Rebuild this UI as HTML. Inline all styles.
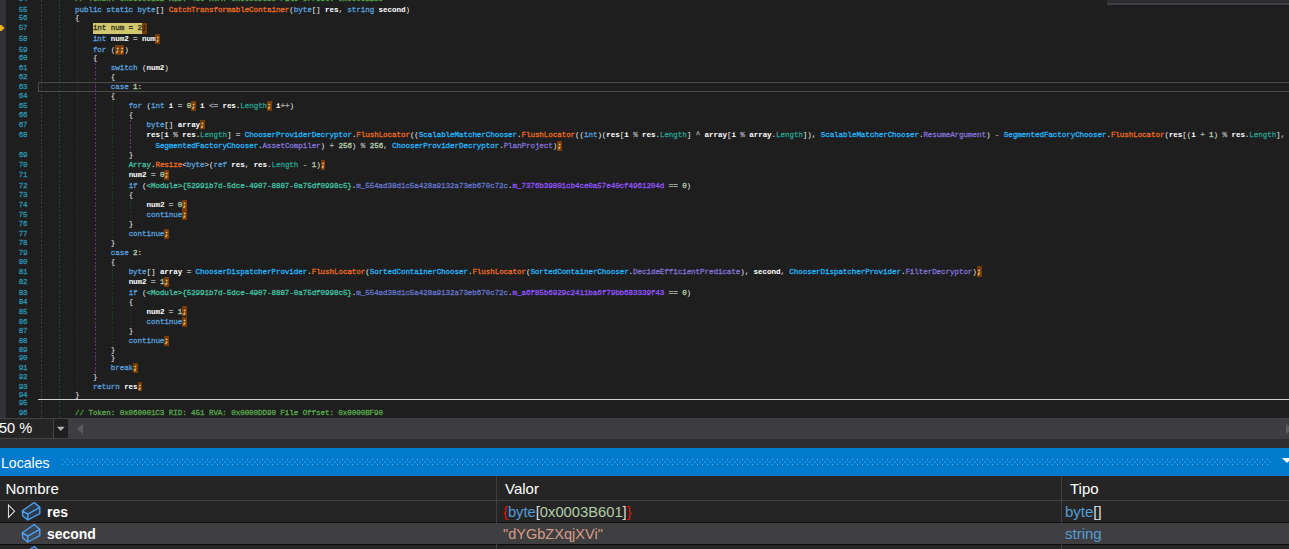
<!DOCTYPE html>
<html><head><meta charset="utf-8"><title>dnSpy</title>
<style>
html,body{margin:0;padding:0;background:#1e1e1e;}
body{width:1289px;height:549px;overflow:hidden;position:relative;font-family:"Liberation Sans",sans-serif;}
#code{position:absolute;left:0;top:0;width:1289px;height:418px;background:#1e1e1e;overflow:hidden;}
#margin{position:absolute;left:0;top:0;width:6px;height:418px;background:#333337;}
.ln,.no{position:absolute;white-space:pre;font-family:"Liberation Mono",monospace;font-size:7.6px;letter-spacing:-0.0938px;line-height:10.0px;height:10.0px;color:#dcdcdc;-webkit-text-stroke:0.3px;}
.no{left:0;width:27.6px;text-align:right;color:#2b91af;}
.k{color:#569cd6} .t{color:#3fbf9f} .st{color:#24b0f3} .sm{color:#e8691e}
.l{color:#fff;font-weight:bold;-webkit-text-stroke:0} .n{color:#b5cea8} .p{color:#dcdcdc;-webkit-text-stroke:0.12px} .o{color:#a0a0a0}
.ip{color:#259c88} .sf{color:#7e70d0} .sf2{color:#9052f5} .vt{color:#6373c6} .c{color:#57a64a}
.h{color:#ffcf8a;font-weight:bold} .hd{color:#2a1800;font-weight:bold}
.yl{color:#34321a}
.bh,.by{position:absolute}
.bh{background:#753c04} .by{background:#d0c86e}
.g{position:absolute;width:1px;}
.g0{background:repeating-linear-gradient(to bottom,#3b3b3b 0 2px,transparent 2px 3.75px);}
.g1{background:repeating-linear-gradient(to bottom,#1c463d 0 2px,transparent 2px 3.75px);}
.g2{background:repeating-linear-gradient(to bottom,#1c2f3e 0 2px,transparent 2px 3.75px);}
.g3{background:repeating-linear-gradient(to bottom,#6c2e80 0 2px,transparent 2px 3.75px);}
.g4{background:repeating-linear-gradient(to bottom,#1c3c1c 0 2px,transparent 2px 3.75px);}
.g5{background:repeating-linear-gradient(to bottom,#6c3488 0 2px,transparent 2px 3.75px);}
#curline{position:absolute;left:38px;top:82px;width:1260px;height:8px;border:1px solid #4a4a4a;box-sizing:content-box;}
#sep{position:absolute;left:38px;top:399px;width:1251px;height:1px;background:#d2d2d2;}
#topbox{position:absolute;left:1107px;top:0;width:182px;height:3px;background:#2d2d30;border-bottom:2px solid #3f3f46;}
#arrow{position:absolute;left:0;top:24px;}
#hbar{position:absolute;left:0;top:418px;width:1289px;height:21px;background:#3e3e42;}
#zoom{position:absolute;left:0;top:0;width:54px;height:21px;background:#252526;color:#fff;font-size:15px;line-height:19px;border:1px solid #434346;border-left:0;box-sizing:border-box;overflow:hidden;}
#zoom span{position:absolute;left:-1px;top:-0.7px;display:inline-block;transform:scaleX(0.97);transform-origin:0 0;}
#zbtn{position:absolute;left:54px;top:0;width:14px;height:21px;background:#1f1f20;border-top:1px solid #434346;border-bottom:1px solid #434346;box-sizing:border-box;}
#zbtn svg{position:absolute;left:0;top:-1px}
#gap{position:absolute;left:0;top:439px;width:1289px;height:9px;background:#2d2d30;}
#title{position:absolute;left:0;top:448px;width:1289px;height:28px;background:#007acc;color:#fff;font-size:15px;line-height:28px;overflow:hidden;}
#title span{position:absolute;left:0.6px;top:1px;display:inline-block;transform:scaleX(0.94);transform-origin:0 0;}
#dots{position:absolute;left:62px;top:11px;}
#tbl{position:absolute;left:0;top:476px;width:1289px;height:73px;background:#252526;color:#fff;font-size:15px;overflow:hidden;}
.hd2{position:absolute;top:0.7px;height:24px;line-height:24px;}
.row{position:absolute;left:0;width:1289px;height:21px;line-height:21px;}
.cell{position:absolute;top:0;height:21px;white-space:pre;}
.nm{left:47px;font-weight:bold;transform:scaleX(0.93);transform-origin:0 0;}
.ico{position:absolute;left:20px;top:0;width:22px;height:21px;overflow:visible}
.vl{position:absolute;width:1px;background:#3f3f46;}
</style></head><body>
<div id="code">
<div id="margin"></div>
<div class="g g0" style="left:41.0px;top:0.0px;height:418.0px"></div><div class="g g1" style="left:59.0px;top:0.0px;height:418.0px"></div><div class="g g2" style="left:77.0px;top:23.0px;height:368.0px"></div><div class="g g3" style="left:95.0px;top:63.2px;height:309.9px"></div><div class="g g4" style="left:112.0px;top:101.4px;height:137.6px"></div><div class="g g4" style="left:112.0px;top:266.1px;height:79.9px"></div><div class="g g5" style="left:130.0px;top:120.0px;height:30.8px"></div><div class="g g4" style="left:130.0px;top:199.5px;height:20.7px"></div><div class="g g4" style="left:130.0px;top:306.1px;height:21.1px"></div>
<div class="by" style="left:92.90px;top:23.00px;width:49.14px;height:10.90px"></div><div class="bh" style="left:142.04px;top:23.00px;width:4.47px;height:10.90px"></div><div class="bh" style="left:155.44px;top:33.90px;width:4.47px;height:10.50px"></div><div class="bh" style="left:115.24px;top:44.50px;width:8.93px;height:10.10px"></div><div class="bh" style="left:191.18px;top:101.40px;width:4.47px;height:9.60px"></div><div class="bh" style="left:267.12px;top:101.40px;width:4.47px;height:9.60px"></div><div class="bh" style="left:200.11px;top:120.00px;width:4.47px;height:9.30px"></div><div class="bh" style="left:557.47px;top:140.70px;width:4.47px;height:10.60px"></div><div class="bh" style="left:320.72px;top:159.50px;width:4.47px;height:10.40px"></div><div class="bh" style="left:164.38px;top:169.90px;width:4.47px;height:9.70px"></div><div class="bh" style="left:182.24px;top:199.50px;width:4.47px;height:10.00px"></div><div class="bh" style="left:182.24px;top:209.50px;width:4.47px;height:10.90px"></div><div class="bh" style="left:164.38px;top:229.00px;width:4.47px;height:10.30px"></div><div class="bh" style="left:977.37px;top:266.10px;width:4.47px;height:10.70px"></div><div class="bh" style="left:164.38px;top:276.80px;width:4.47px;height:10.10px"></div><div class="bh" style="left:182.24px;top:306.10px;width:4.47px;height:10.40px"></div><div class="bh" style="left:182.24px;top:316.50px;width:4.47px;height:10.80px"></div><div class="bh" style="left:164.38px;top:335.70px;width:4.47px;height:10.20px"></div><div class="bh" style="left:133.11px;top:362.50px;width:4.47px;height:10.40px"></div><div class="bh" style="left:137.57px;top:381.60px;width:4.47px;height:9.90px"></div>
<div id="curline"></div>
<div id="sep"></div>
<div class="ln" style="top:-5.72px;left:75.04px"><span class="c">// Token: 0x060001C2 RID: 450 RVA: 0x0000DC30 File Offset: 0x0000BE30</span></div><div class="no" style="top:-5.72px">54</div><div class="ln" style="top:4.88px;left:75.04px"><span class="k">public</span><span class="p"> </span><span class="k">static</span><span class="p"> </span><span class="k">byte</span><span class="p">[] </span><span class="sm">CatchTransformableContainer</span><span class="p">(</span><span class="k">byte</span><span class="p">[] </span><span class="l">res</span><span class="p">, </span><span class="k">string</span><span class="p"> </span><span class="l">second</span><span class="p">)</span></div><div class="no" style="top:4.88px">55</div><div class="ln" style="top:13.08px;left:75.04px"><span class="p">{</span></div><div class="no" style="top:13.08px">56</div><div class="ln" style="top:22.88px;left:92.90px"><span class="yl">int num = 2</span><span class="hd">;</span></div><div class="no" style="top:22.88px">57</div><div class="ln" style="top:33.68px;left:92.90px"><span class="k">int</span><span class="p"> </span><span class="l">num2</span><span class="p"> </span><span class="o">=</span><span class="p"> </span><span class="l">num</span><span class="h">;</span></div><div class="no" style="top:33.68px">58</div><div class="ln" style="top:44.68px;left:92.90px"><span class="k">for</span><span class="p"> (</span><span class="h">;;</span><span class="p">)</span></div><div class="no" style="top:44.68px">59</div><div class="ln" style="top:53.08px;left:92.90px"><span class="p">{</span></div><div class="no" style="top:53.08px">60</div><div class="ln" style="top:62.88px;left:110.77px"><span class="k">switch</span><span class="p"> (</span><span class="l">num2</span><span class="p">)</span></div><div class="no" style="top:62.88px">61</div><div class="ln" style="top:71.68px;left:110.77px"><span class="p">{</span></div><div class="no" style="top:71.68px">62</div><div class="ln" style="top:81.88px;left:110.77px"><span class="k">case</span><span class="p"> </span><span class="n">1</span><span class="p">:</span></div><div class="no" style="top:81.88px">63</div><div class="ln" style="top:90.88px;left:110.77px"><span class="p">{</span></div><div class="no" style="top:90.88px">64</div><div class="ln" style="top:100.68px;left:128.64px"><span class="k">for</span><span class="p"> (</span><span class="k">int</span><span class="p"> </span><span class="l">i</span><span class="p"> </span><span class="o">=</span><span class="p"> </span><span class="n">0</span><span class="h">;</span><span class="p"> </span><span class="l">i</span><span class="p"> </span><span class="o">&lt;=</span><span class="p"> </span><span class="l">res</span><span class="p">.</span><span class="ip">Length</span><span class="h">;</span><span class="p"> </span><span class="l">i</span><span class="o">++</span><span class="p">)</span></div><div class="no" style="top:100.68px">65</div><div class="ln" style="top:110.08px;left:128.64px"><span class="p">{</span></div><div class="no" style="top:110.08px">66</div><div class="ln" style="top:119.88px;left:146.51px"><span class="k">byte</span><span class="p">[] </span><span class="l">array</span><span class="h">;</span></div><div class="no" style="top:119.88px">67</div><div class="ln" style="top:129.88px;left:146.51px"><span class="l">res</span><span class="p">[</span><span class="l">i</span><span class="p"> </span><span class="o">%</span><span class="p"> </span><span class="l">res</span><span class="p">.</span><span class="ip">Length</span><span class="p">] </span><span class="o">=</span><span class="p"> </span><span class="st">ChooserProviderDecryptor</span><span class="p">.</span><span class="sm">FlushLocator</span><span class="p">((</span><span class="st">ScalableMatcherChooser</span><span class="p">.</span><span class="sm">FlushLocator</span><span class="p">((</span><span class="k">int</span><span class="p">)(</span><span class="l">res</span><span class="p">[</span><span class="l">i</span><span class="p"> </span><span class="o">%</span><span class="p"> </span><span class="l">res</span><span class="p">.</span><span class="ip">Length</span><span class="p">] </span><span class="o">^</span><span class="p"> </span><span class="l">array</span><span class="p">[</span><span class="l">i</span><span class="p"> </span><span class="o">%</span><span class="p"> </span><span class="l">array</span><span class="p">.</span><span class="ip">Length</span><span class="p">]), </span><span class="st">ScalableMatcherChooser</span><span class="p">.</span><span class="sf">ResumeArgument</span><span class="p">) </span><span class="o">-</span><span class="p"> </span><span class="st">SegmentedFactoryChooser</span><span class="p">.</span><span class="sm">FlushLocator</span><span class="p">(</span><span class="l">res</span><span class="p">[(</span><span class="l">i</span><span class="p"> </span><span class="o">+</span><span class="p"> </span><span class="n">1</span><span class="p">) </span><span class="o">%</span><span class="p"> </span><span class="l">res</span><span class="p">.</span><span class="ip">Length</span><span class="p">],</span></div><div class="no" style="top:129.88px">68</div><div class="ln" style="top:141.48px;left:155.44px"><span class="st">SegmentedFactoryChooser</span><span class="p">.</span><span class="sf">AssetCompiler</span><span class="p">) </span><span class="o">+</span><span class="p"> </span><span class="n">256</span><span class="p">) </span><span class="o">%</span><span class="p"> </span><span class="n">256</span><span class="p">, </span><span class="st">ChooserProviderDecryptor</span><span class="p">.</span><span class="sf">PlanProject</span><span class="p">)</span><span class="h">;</span></div><div class="ln" style="top:149.68px;left:128.64px"><span class="p">}</span></div><div class="no" style="top:149.68px">69</div><div class="ln" style="top:159.88px;left:128.64px"><span class="t">Array</span><span class="p">.</span><span class="sm">Resize</span><span class="p">&lt;</span><span class="k">byte</span><span class="p">&gt;(</span><span class="k">ref</span><span class="p"> </span><span class="l">res</span><span class="p">, </span><span class="l">res</span><span class="p">.</span><span class="ip">Length</span><span class="p"> </span><span class="o">-</span><span class="p"> </span><span class="n">1</span><span class="p">)</span><span class="h">;</span></div><div class="no" style="top:159.88px">70</div><div class="ln" style="top:169.88px;left:128.64px"><span class="l">num2</span><span class="p"> </span><span class="o">=</span><span class="p"> </span><span class="n">0</span><span class="h">;</span></div><div class="no" style="top:169.88px">71</div><div class="ln" style="top:181.08px;left:128.64px"><span class="k">if</span><span class="p"> (</span><span class="t">&lt;Module&gt;{52991b7d-5dce-4907-8887-0a75df0998c5}</span><span class="p">.</span><span class="vt">m_554ad38d1c5a428a9132a73eb670c72c</span><span class="p">.</span><span class="sf2">m_7376b39801cb4ce0a57e40cf4961204d</span><span class="p"> </span><span class="o">==</span><span class="p"> </span><span class="n">0</span><span class="p">)</span></div><div class="no" style="top:181.08px">72</div><div class="ln" style="top:189.68px;left:128.64px"><span class="p">{</span></div><div class="no" style="top:189.68px">73</div><div class="ln" style="top:199.78px;left:146.51px"><span class="l">num2</span><span class="p"> </span><span class="o">=</span><span class="p"> </span><span class="n">0</span><span class="h">;</span></div><div class="no" style="top:199.78px">74</div><div class="ln" style="top:209.88px;left:146.51px"><span class="k">continue</span><span class="h">;</span></div><div class="no" style="top:209.88px">75</div><div class="ln" style="top:219.08px;left:128.64px"><span class="p">}</span></div><div class="no" style="top:219.08px">76</div><div class="ln" style="top:228.68px;left:128.64px"><span class="k">continue</span><span class="h">;</span></div><div class="no" style="top:228.68px">77</div><div class="ln" style="top:237.88px;left:110.77px"><span class="p">}</span></div><div class="no" style="top:237.88px">78</div><div class="ln" style="top:247.88px;left:110.77px"><span class="k">case</span><span class="p"> </span><span class="n">2</span><span class="p">:</span></div><div class="no" style="top:247.88px">79</div><div class="ln" style="top:256.68px;left:110.77px"><span class="p">{</span></div><div class="no" style="top:256.68px">80</div><div class="ln" style="top:266.68px;left:128.64px"><span class="k">byte</span><span class="p">[] </span><span class="l">array</span><span class="p"> </span><span class="o">=</span><span class="p"> </span><span class="st">ChooserDispatcherProvider</span><span class="p">.</span><span class="sm">FlushLocator</span><span class="p">(</span><span class="st">SortedContainerChooser</span><span class="p">.</span><span class="sm">FlushLocator</span><span class="p">(</span><span class="st">SortedContainerChooser</span><span class="p">.</span><span class="sf">DecideEfficientPredicate</span><span class="p">), </span><span class="l">second</span><span class="p">, </span><span class="st">ChooserDispatcherProvider</span><span class="p">.</span><span class="sf">FilterDecryptor</span><span class="p">)</span><span class="h">;</span></div><div class="no" style="top:266.68px">81</div><div class="ln" style="top:276.88px;left:128.64px"><span class="l">num2</span><span class="p"> </span><span class="o">=</span><span class="p"> </span><span class="n">1</span><span class="h">;</span></div><div class="no" style="top:276.88px">82</div><div class="ln" style="top:287.68px;left:128.64px"><span class="k">if</span><span class="p"> (</span><span class="t">&lt;Module&gt;{52991b7d-5dce-4907-8887-0a75df0998c5}</span><span class="p">.</span><span class="vt">m_554ad38d1c5a428a9132a73eb670c72c</span><span class="p">.</span><span class="sf2">m_a6f85b6929c2411ba6f79bb683339f43</span><span class="p"> </span><span class="o">==</span><span class="p"> </span><span class="n">0</span><span class="p">)</span></div><div class="no" style="top:287.68px">83</div><div class="ln" style="top:296.98px;left:128.64px"><span class="p">{</span></div><div class="no" style="top:296.98px">84</div><div class="ln" style="top:306.88px;left:146.51px"><span class="l">num2</span><span class="p"> </span><span class="o">=</span><span class="p"> </span><span class="n">1</span><span class="h">;</span></div><div class="no" style="top:306.88px">85</div><div class="ln" style="top:316.88px;left:146.51px"><span class="k">continue</span><span class="h">;</span></div><div class="no" style="top:316.88px">86</div><div class="ln" style="top:326.08px;left:128.64px"><span class="p">}</span></div><div class="no" style="top:326.08px">87</div><div class="ln" style="top:335.88px;left:128.64px"><span class="k">continue</span><span class="h">;</span></div><div class="no" style="top:335.88px">88</div><div class="ln" style="top:344.88px;left:110.77px"><span class="p">}</span></div><div class="no" style="top:344.88px">89</div><div class="ln" style="top:352.98px;left:110.77px"><span class="p">}</span></div><div class="no" style="top:352.98px">90</div><div class="ln" style="top:362.78px;left:110.77px"><span class="k">break</span><span class="h">;</span></div><div class="no" style="top:362.78px">91</div><div class="ln" style="top:371.98px;left:92.90px"><span class="p">}</span></div><div class="no" style="top:371.98px">92</div><div class="ln" style="top:382.08px;left:92.90px"><span class="k">return</span><span class="p"> </span><span class="l">res</span><span class="h">;</span></div><div class="no" style="top:382.08px">93</div><div class="ln" style="top:389.88px;left:75.04px"><span class="p">}</span></div><div class="no" style="top:389.88px">94</div><div class="no" style="top:397.78px">95</div><div class="ln" style="top:408.08px;left:75.04px"><span class="c">// Token: 0x060001C3 RID: 451 RVA: 0x0000DD90 File Offset: 0x0000BF90</span></div><div class="no" style="top:408.08px">96</div>
<div id="topbox"></div>
<svg id="arrow" width="5" height="8" viewBox="0 0 5 8"><path d="M0 1 L1.5 1 L4.5 4 L1.5 7 L0 7 Z" fill="#f0b020"/></svg>
</div>
<div id="hbar">
 <div id="zoom"><span>50 %</span></div>
 <div id="zbtn"><svg width="14" height="21" viewBox="0 0 14 21"><path d="M2.9 8.8 L10.7 8.8 L6.8 13 Z" fill="#b0b0b0"/></svg></div>
 <svg style="position:absolute;left:76px;top:5px" width="8" height="12" viewBox="0 0 8 12"><path d="M7 0.7 L7 10.9 L1 5.8 Z" fill="#5c5c60"/></svg>
 <svg style="position:absolute;left:1285px;top:5px" width="8" height="12" viewBox="0 0 8 12"><path d="M1 0.5 L1 11 L7 5.8 Z" fill="#5c5c60"/></svg>
</div>
<div id="gap"></div>
<div id="title"><span>Locales</span>
 <svg id="dots" width="1210" height="7"><defs><pattern id="dp" width="5" height="5" patternUnits="userSpaceOnUse"><rect x="0" y="0" width="1" height="1" fill="#6ab2e4"/><rect x="2.5" y="2.5" width="1" height="1" fill="#6ab2e4"/></pattern></defs><rect width="1210" height="6" fill="url(#dp)"/></svg>
 <svg style="position:absolute;left:1281px;top:10px" width="8" height="6" viewBox="0 0 8 6"><path d="M1 0 L11 0 L6 5 Z" fill="#fff"/></svg>
</div>
<div id="tbl">
 <div class="hd2" style="left:5.5px">Nombre</div>
 <div class="hd2" style="left:505px">Valor</div>
 <div class="hd2" style="left:1070px">Tipo</div>
 <div style="position:absolute;left:0;top:24px;width:1289px;height:1px;background:#3f3f46"></div>
 <div class="row" style="top:25px;background:#252526">
   <svg style="position:absolute;left:5px;top:2px" width="12" height="17" viewBox="0 0 12 17"><path d="M3.5 2 L3.5 14.4 L9.6 8.2 Z" fill="none" stroke="#d8d8d8" stroke-width="1.1"/></svg>
   <svg class="ico" viewBox="0 0 22 21"><path d="M2.3 9.8 L14.2 1.5 L19.8 6.4 L19.8 12.6 L7.8 19 L2.8 15 Z" fill="#2b394b"/><path d="M2.3 9.8 L14.2 1.5 L19.8 6.4 L19.8 12.6 L7.8 19 L2.8 15 Z M2.3 9.8 L7.8 13.2 L19.8 6.4 M7.8 13.2 L7.8 19" fill="none" stroke="#4da0f0" stroke-width="1.4" stroke-linejoin="round"/></svg>
   <div class="cell nm">res</div>
   <div class="cell" style="left:503px;transform:scaleX(0.982);transform-origin:0 0"><span style="color:#e51400">{</span><span style="color:#569cd6">byte</span><span style="color:#dcdcdc">[</span><span style="color:#b5cea8">0x0003B601</span><span style="color:#dcdcdc">]</span><span style="color:#e51400">}</span></div>
   <div class="cell" style="left:1065px"><span style="color:#569cd6">byte</span><span style="color:#dcdcdc">[]</span></div>
 </div>
 <div style="position:absolute;left:0;top:46px;width:1289px;height:1px;background:#0c0c0c"></div>
 <div class="row" style="top:47px;background:#3f3f41">
   <svg class="ico" viewBox="0 0 22 21"><path d="M2.3 9.8 L14.2 1.5 L19.8 6.4 L19.8 12.6 L7.8 19 L2.8 15 Z" fill="#3a4758"/><path d="M2.3 9.8 L14.2 1.5 L19.8 6.4 L19.8 12.6 L7.8 19 L2.8 15 Z M2.3 9.8 L7.8 13.2 L19.8 6.4 M7.8 13.2 L7.8 19" fill="none" stroke="#4da0f0" stroke-width="1.4" stroke-linejoin="round"/></svg>
   <div class="cell nm">second</div>
   <div class="cell" style="left:503px;color:#d69d85;transform:scaleX(0.97);transform-origin:0 0">"dYGbZXqjXVi"</div>
   <div class="cell" style="left:1065px;color:#569cd6">string</div>
 </div>
 <div style="position:absolute;left:0;top:68px;width:1289px;height:1px;background:#0c0c0c"></div>
 <div class="row" style="top:69px;background:#252526">
   <svg class="ico" viewBox="0 0 22 21"><path d="M2.3 9.8 L14.2 1.5 L19.8 6.4 L19.8 12.6 L7.8 19 L2.8 15 Z" fill="#2b394b"/><path d="M2.3 9.8 L14.2 1.5 L19.8 6.4 L19.8 12.6 L7.8 19 L2.8 15 Z M2.3 9.8 L7.8 13.2 L19.8 6.4 M7.8 13.2 L7.8 19" fill="none" stroke="#4da0f0" stroke-width="1.4" stroke-linejoin="round"/></svg>
 </div>
 <div class="vl" style="left:496px;top:0;height:73px"></div>
 <div class="vl" style="left:1061px;top:0;height:73px"></div>
</div>

</body></html>
